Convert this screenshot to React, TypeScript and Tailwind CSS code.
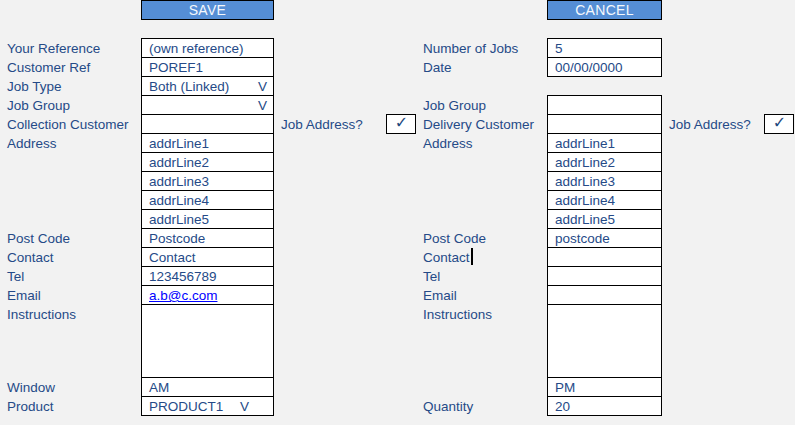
type Cell = {
    label?: string
    value?: string
    drop?: string
    link?: boolean
    cursor?: boolean
}

type Row = {
    left: Cell
    right?: Cell
    rightBox?: boolean
    check?: boolean
    tall?: boolean
}

const rows: Row[] = [
    { left: { label: 'Your Reference', value: '(own reference)' }, right: { label: 'Number of Jobs', value: '5' }, rightBox: true },
    { left: { label: 'Customer Ref', value: 'POREF1' }, right: { label: 'Date', value: '00/00/0000' }, rightBox: true },
    { left: { label: 'Job Type', value: 'Both (Linked)', drop: 'w-[109px]' } },
    { left: { label: 'Job Group', value: '', drop: 'w-[109px]' }, right: { label: 'Job Group', value: '' }, rightBox: true },
    { left: { label: 'Collection Customer', value: '' }, right: { label: 'Delivery Customer', value: '' }, rightBox: true, check: true },
    { left: { label: 'Address', value: 'addrLine1' }, right: { label: 'Address', value: 'addrLine1' }, rightBox: true },
    { left: { value: 'addrLine2' }, right: { value: 'addrLine2' }, rightBox: true },
    { left: { value: 'addrLine3' }, right: { value: 'addrLine3' }, rightBox: true },
    { left: { value: 'addrLine4' }, right: { value: 'addrLine4' }, rightBox: true },
    { left: { value: 'addrLine5' }, right: { value: 'addrLine5' }, rightBox: true },
    { left: { label: 'Post Code', value: 'Postcode' }, right: { label: 'Post Code', value: 'postcode' }, rightBox: true },
    { left: { label: 'Contact', value: 'Contact' }, right: { label: 'Contact', value: '', cursor: true }, rightBox: true },
    { left: { label: 'Tel', value: '123456789' }, right: { label: 'Tel', value: '' }, rightBox: true },
    { left: { label: 'Email', value: 'a.b@c.com', link: true }, right: { label: 'Email', value: '' }, rightBox: true },
    { left: { label: 'Instructions', value: '' }, right: { label: 'Instructions', value: '' }, rightBox: true, tall: true },
    { left: { label: 'Window', value: 'AM' }, right: { value: 'PM' }, rightBox: true },
    { left: { label: 'Product', value: 'PRODUCT1', drop: 'w-[91px]' }, right: { label: 'Quantity', value: '20' }, rightBox: true },
]

const Label = ({ text, cursor }: { text?: string; cursor?: boolean }) => (
    <div className="pl-[7px] pt-[2px] leading-[17px] whitespace-nowrap flex items-start">
        {text}
        {cursor && <span className="inline-block w-[2px] h-[17px] bg-black ml-px -mt-px" />}
    </div>
)

const Box = ({ cell, last }: { cell: Cell; last: boolean }) => (
    <div
        className={
            'bg-white border-t border-x border-black pl-[7px] pt-px leading-[17px] whitespace-nowrap flex ' +
            (last ? 'shadow-[0_1px_0_0_#000]' : '')
        }
    >
        {cell.link ? (
            <span className="text-[#0000ff] underline">{cell.value}</span>
        ) : (
            <span className={cell.drop}>{cell.value}</span>
        )}
        {cell.drop && <span>V</span>}
    </div>
)

const Check = () => (
    <div className="bg-white border border-black h-[20px] flex justify-center">
        <span className="text-[#1f497d] text-[16px] leading-[15px] font-bold font-['DejaVu_Sans'] pl-[1px]">✓</span>
    </div>
)

export default function App() {
    return (
        <div className="w-[795px] h-[425px] bg-[#f2f2f2] text-[#254a87] text-[13.5px] font-['Liberation_Sans',Arial,sans-serif] overflow-hidden">
            <div className="grid grid-cols-[141px_133px_112px_30px_131px_115px_102px_30px] grid-rows-[19px_19px]">
                <div />
                <button className="h-[20px] bg-[#558ed5] border border-black text-[#f4f8fc] text-[14px] leading-[18px] tracking-[0.3px]">SAVE</button>
                <div className="col-span-3" />
                <button className="h-[20px] bg-[#558ed5] border border-black text-[#f4f8fc] text-[14px] leading-[18px] tracking-[0.3px]">CANCEL</button>
                <div className="col-span-2" />
                <div className="col-span-8" />
            </div>
            <div className="grid grid-cols-[141px_133px_112px_30px_131px_115px_102px_30px]">
                {rows.map((r, i) => {
                    const h = r.tall ? 'h-[73px]' : 'h-[19px]'
                    const lastLeft = i === rows.length - 1
                    const nextRight = rows[i + 1]
                    const lastRight = !nextRight || !nextRight.rightBox
                    return (
                        <div key={i} className="contents">
                            <div className={h}>
                                <Label text={r.left.label} />
                            </div>
                            <div className={h + ' grid'}>
                                <Box cell={r.left} last={lastLeft} />
                            </div>
                            <div className={h}>{r.check && <Label text="Job Address?" />}</div>
                            <div className={h}>{r.check && <Check />}</div>
                            <div className={h}>
                                <Label text={r.right?.label} cursor={r.right?.cursor} />
                            </div>
                            <div className={h + ' grid'}>
                                {r.rightBox && r.right && <Box cell={r.right} last={lastRight} />}
                            </div>
                            <div className={h}>{r.check && <Label text="Job Address?" />}</div>
                            <div className={h}>{r.check && <Check />}</div>
                        </div>
                    )
                })}
            </div>
        </div>
    )
}
